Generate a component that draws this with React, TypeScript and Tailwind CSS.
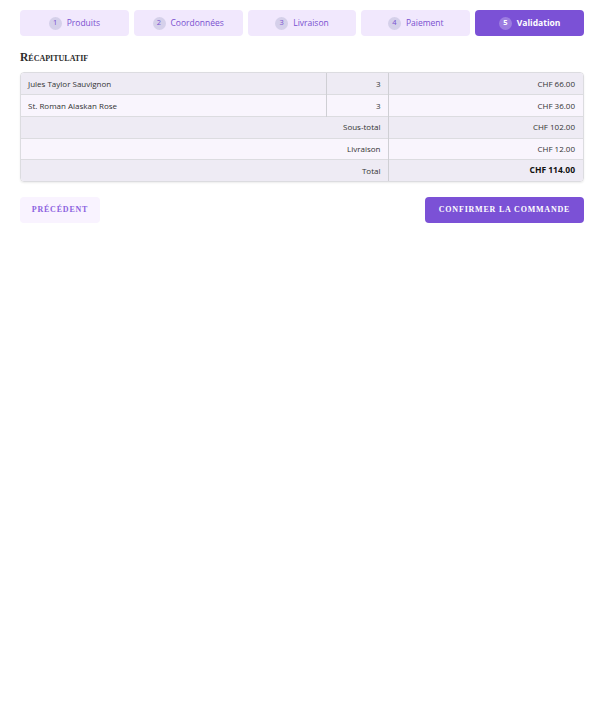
const steps = ['Produits', 'Coordonnées', 'Livraison', 'Paiement', 'Validation']

const items = [
  { name: 'Jules Taylor Sauvignon', qty: 3, price: 'CHF 66.00' },
  { name: 'St. Roman Alaskan Rose', qty: 3, price: 'CHF 36.00' },
]

const totals = [
  { label: 'Sous-total', value: 'CHF 102.00' },
  { label: 'Livraison', value: 'CHF 12.00' },
  { label: 'Total', value: 'CHF 114.00', bold: true },
]

export default function App() {
  const rowBg = (i: number) => (i % 2 === 0 ? 'bg-[#eeebf4]' : 'bg-[#f9f5fd]')

  return (
    <div className="bg-white pl-5 pr-4 pt-[10px] font-['Open_Sans',sans-serif] text-[#333]">
      <div className="flex gap-[5px]">
        {steps.map((step, i) => {
          const active = i === steps.length - 1
          return (
            <div
              key={step}
              className={`flex h-[26px] flex-1 items-center justify-center gap-[5px] rounded-[4px] text-[8.5px] ${
                active ? 'bg-[#7b51d6] font-bold text-white' : 'bg-[#f1e8fd] text-[#7a50d0]'
              }`}
            >
              <span
                className={`flex h-[13px] w-[13px] items-center justify-center rounded-full text-[7.5px] ${
                  active ? 'bg-white/25 text-white' : 'bg-[#d5d0ea] text-[#7a50d0]'
                }`}
              >
                {i + 1}
              </span>
              {step}
            </div>
          )
        })}
      </div>

      <h2 className="mt-[13px] font-['Liberation_Serif',serif] text-[11.5px] font-bold text-[#2c2c2c] [font-variant:small-caps]">
        Récapitulatif
      </h2>

      <div className="mt-[6px] overflow-hidden rounded-[4px] border border-[#dcdce0] shadow-[0_1px_2px_rgba(0,0,0,0.08)]">
        <table className="w-full border-collapse text-[8px] text-[#333]">
          <tbody>
            {items.map((item, i) => (
              <tr key={item.name} className={`h-[21.6px] border-b border-[#dcdce0] ${rowBg(i)}`}>
                <td className="px-[7px]">{item.name}</td>
                <td className="w-[62px] border-l border-[#cfcfd4] px-[7px] text-right">{item.qty}</td>
                <td className="w-[195px] border-l border-[#cfcfd4] px-[8px] text-right">{item.price}</td>
              </tr>
            ))}
            {totals.map((t, i) => (
              <tr
                key={t.label}
                className={`h-[21.6px] ${i < totals.length - 1 ? 'border-b border-[#dcdce0]' : ''} ${rowBg(i)}`}
              >
                <td colSpan={2} className="px-[7px] text-right">
                  {t.label}
                </td>
                <td
                  className={`border-l border-[#cfcfd4] px-[8px] text-right ${
                    t.bold ? 'text-[8.5px] font-bold text-[#111]' : ''
                  }`}
                >
                  {t.value}
                </td>
              </tr>
            ))}
          </tbody>
        </table>
      </div>

      <div className="mt-[15px] flex items-center justify-between font-['Liberation_Serif',serif]">
        <button className="h-[26px] w-[80px] rounded-[4px] bg-[#f9f3ff] text-[8px] font-bold tracking-[0.8px] text-[#8c62e0]">
          PRÉCÉDENT
        </button>
        <button className="h-[26px] w-[159px] rounded-[4px] bg-[#7b51d6] text-[8px] font-bold tracking-[0.8px] text-white">
          CONFIRMER LA COMMANDE
        </button>
      </div>
    </div>
  )
}
